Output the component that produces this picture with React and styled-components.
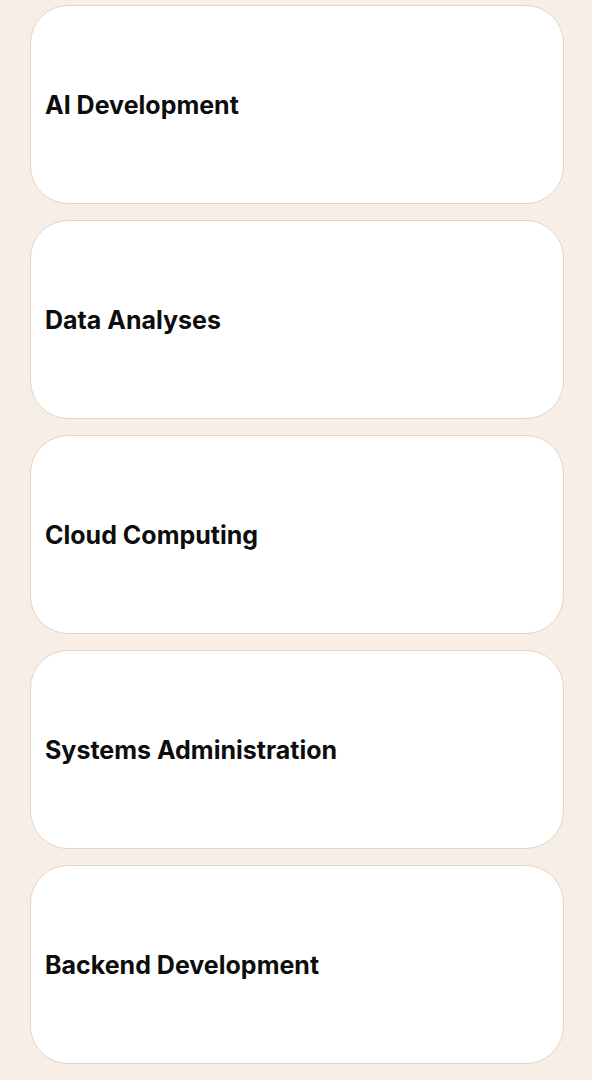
import React from "react";
import styled, { createGlobalStyle } from "styled-components";

const topics = [
  "AI Development",
  "Data Analyses",
  "Cloud Computing",
  "Systems Administration",
  "Backend Development",
  "Frontend Development",
];

const GlobalStyle = createGlobalStyle`
  html, body {
    margin: 0;
    padding: 0;
    background: #f6eee7;
    font-family: Inter, "Noto Sans", sans-serif;
  }
`;

const Page = styled.div`
  min-height: 100vh;
  padding: 5px 28px 0 30px;
  box-sizing: border-box;
`;

const List = styled.ul`
  list-style: none;
  margin: 0;
  padding: 0;
  display: flex;
  flex-direction: column;
  gap: 16px;
`;

const Card = styled.li`
  height: 199px;
  box-sizing: border-box;
  display: flex;
  align-items: center;
  padding: 0 14px;
  background: #ffffff;
  border: 1px solid #e6d4c2;
  border-radius: 38px;
`;

const Title = styled.span`
  font-size: 25px;
  font-weight: 700;
  color: #0d0d0d;
`;

const App = () => {
  return (
    <>
      <GlobalStyle />
      <Page>
        <List>
          {topics.map((topic) => (
            <Card key={topic}>
              <Title>{topic}</Title>
            </Card>
          ))}
        </List>
      </Page>
    </>
  );
};

export default App;
